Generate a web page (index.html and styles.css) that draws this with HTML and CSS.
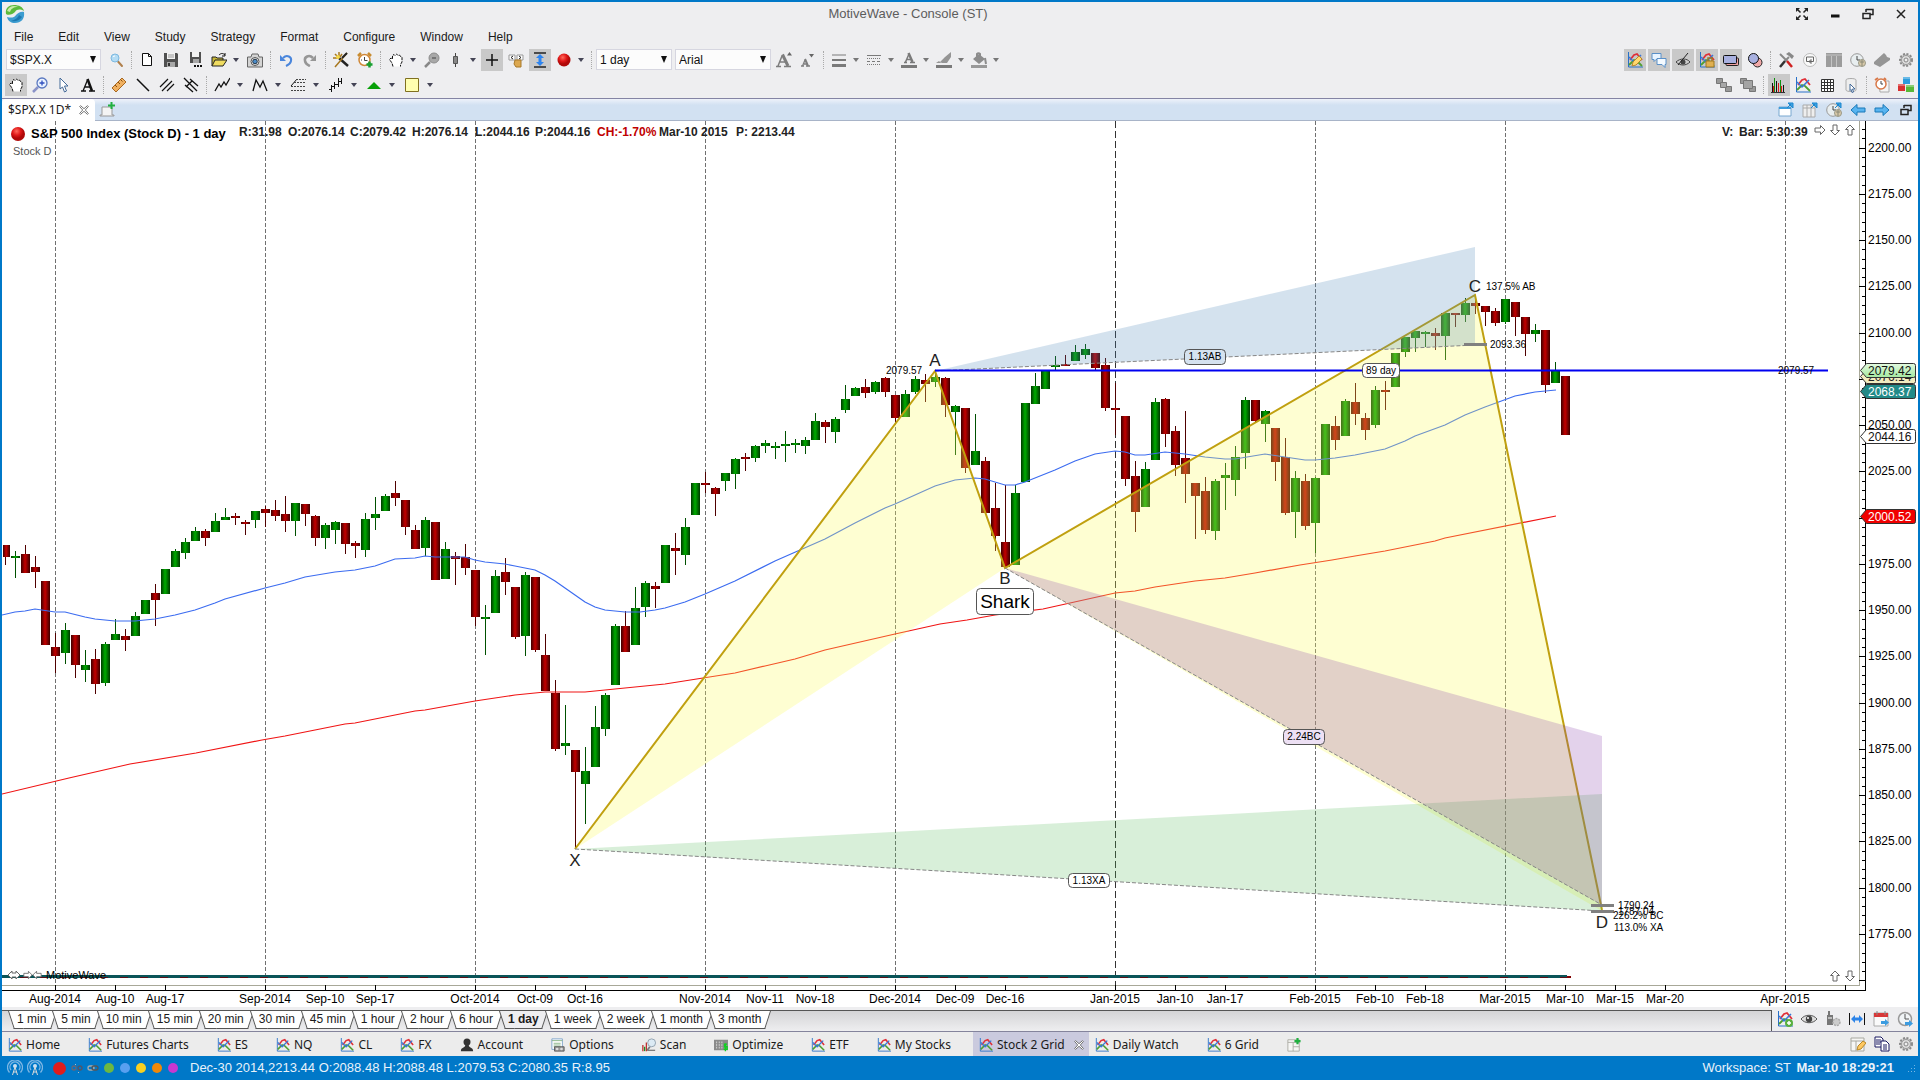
FILE: index.html
```html
<!DOCTYPE html>
<html lang="en">
<head>
<meta charset="utf-8">
<title>MotiveWave - Console (ST)</title>
<link rel="stylesheet" href="styles.css">
</head>
<body>
<svg class="defs" aria-hidden="true">
  <defs>
    <linearGradient id="gUp"><stop offset="0" stop-color="#003800"/><stop offset=".45" stop-color="#00ac00"/><stop offset="1" stop-color="#003800"/></linearGradient>
    <linearGradient id="gDown"><stop offset="0" stop-color="#3c0000"/><stop offset=".45" stop-color="#c40000"/><stop offset="1" stop-color="#3c0000"/></linearGradient>
    <linearGradient id="gFlag" x2="0" y2="1"><stop offset="0" stop-color="#e4fbe0"/><stop offset="1" stop-color="#a4e8a0"/></linearGradient>
    <radialGradient id="gRed" cx=".4" cy=".3"><stop offset="0" stop-color="#ff6a5c"/><stop offset=".6" stop-color="#e01818"/><stop offset="1" stop-color="#b00808"/></radialGradient>
  </defs>
  <symbol id="i-logo" viewBox="0 0 20 20"><path d="M1 10C0 4 4 1 9 1c5 0 9 2 10 6-4-2-7-2-9 1-2 2-6 4-9 2z" fill="#5cba3c"/><path d="M2 7c2-5 7-6 11-4-5 0-7 2-8 5z" fill="#c8eaa8"/><path d="M19 8c1 7-3 11-9 11-4 0-7-2-8-6 4 1 7 1 9-2 2-2 5-4 8-3z" fill="#3c9cd0"/><path d="M17 13c-3 4-7 5-11 4 4-1 7-3 8-6z" fill="#1c78b0"/></symbol>
  <symbol id="i-search" viewBox="0 0 16 16"><path d="M10 9.500l4 4.500" stroke="#b0804c" stroke-width="2" stroke-linecap="round"/><circle cx="7" cy="6" r="4" fill="#b4dcf4" stroke="#7cb8e0"/><path d="M5 5a2 2 0 0 1 2-1" stroke="#fff" fill="none"/></symbol>
  <symbol id="i-new" viewBox="0 0 16 16"><path d="M3.500 1.500h6l3 3v9h-9z" fill="#fff" stroke="#111"/><path d="M9.500 1.500v3h3" fill="none" stroke="#111"/></symbol>
  <symbol id="i-save" viewBox="0 0 16 16"><path d="M1 1h13l1 1v13H1z" fill="#505050"/><path d="M4 1h8v6H4z" fill="#f2f2f2"/><path d="M5 3h6M5 5h6" stroke="#999"/><path d="M4 10h8v5H4z" fill="#a8a8a8"/><path d="M5 11h2v3H5z" fill="#333"/></symbol>
  <symbol id="i-saveas" viewBox="0 0 16 16"><path d="M3 0h11v11H3z" fill="#505050"/><path d="M5 0h7v5H5z" fill="#f2f2f2"/><path d="M6 7h6v4H6z" fill="#a8a8a8"/><path d="M7 14h2M10 14h2M13 14h2" stroke="#111" stroke-width="2"/></symbol>
  <symbol id="i-open" viewBox="0 0 16 16"><path d="M1 14V5h4l1 1h6v3" fill="#c8b838" stroke="#222"/><path d="M1 14l3-6h12l-4 6z" fill="#f0dc60" stroke="#222"/><path d="M8 3c2-2 4-2 6 0M14 1v3h-3" fill="none" stroke="#111"/></symbol>
  <symbol id="i-camera" viewBox="0 0 16 16"><path d="M5 2h6l1 3h3.500v10H.5V5H4z" fill="#d4d4d4" stroke="#666"/><circle cx="8" cy="9.500" r="4" fill="#eee" stroke="#555"/><circle cx="8" cy="9.500" r="2.300" fill="#4c8cc8" stroke="#234"/></symbol>
  <symbol id="i-undo" viewBox="0 0 16 16"><path d="M2 3v6h6z" fill="#4a86dc"/><path d="M5 6c4-4 9-1 8 3-.5 3-3 4-5 5" fill="none" stroke="#4a86dc" stroke-width="2"/></symbol>
  <symbol id="i-redo" viewBox="0 0 16 16"><path d="M14 3v6H8z" fill="#969696"/><path d="M11 6C7 2 2 5 3 9c.5 3 3 4 5 5" fill="none" stroke="#969696" stroke-width="2.500"/></symbol>
  <symbol id="i-wand" viewBox="0 0 16 16"><path d="M6 6l9 8" stroke="#222" stroke-width="2.500"/><path d="M14 1L2 15M2 2l4 4M6 0v5M0 6h5M9 2L7 5" stroke="#a87820" stroke-width="1.500"/><path d="M14 1l-5 5" stroke="#222" stroke-width="2"/><circle cx="5" cy="5" r="2" fill="#f4d848"/></symbol>
  <symbol id="i-alarm" viewBox="0 0 16 16"><path d="M1 4l3-3M14 4l-3-3" stroke="#c88c30" stroke-width="2.500"/><circle cx="7.500" cy="8" r="5.500" fill="#fff" stroke="#d08838" stroke-width="1.500"/><path d="M7.500 5v3.500h3M4 8h1" fill="none" stroke="#444"/><path d="M12.500 9.500v6M9.500 12.500h6" stroke="#18a030" stroke-width="2.500"/></symbol>
  <symbol id="i-hand" viewBox="0 0 16 16"><path d="M5 14.500L4 11 1.500 7.500 3 6l1.500 1V3.500L6 2.500l1 1L8.500 2 10 3.500l1.500-.5 1 1.500 1.500.5v5l-1.500 2.500v2z" fill="#fff"/><path d="M5 14.500L4 11 1.500 7.500 3 6l1.500 1V3.500L6 2.500l1 1L8.500 2 10 3.500l1.500-.5 1 1.500 1.500.5v5l-1.500 2.500v2" fill="none" stroke="#111" stroke-dasharray="3 1"/></symbol>
  <symbol id="i-zoomout" viewBox="0 0 16 16"><path d="M6 10l-5 5" stroke="#888" stroke-width="2.500"/><circle cx="10" cy="6" r="5" fill="#a8a8a8" stroke="#8c8c8c"/><path d="M8 6h4" stroke="#444"/></symbol>
  <symbol id="i-zoomin" viewBox="0 0 16 16"><path d="M6 10l-5 5" stroke="#8a93c8" stroke-width="2.500"/><circle cx="10" cy="6" r="5" fill="#eaf2ff" stroke="#5a78c0" stroke-width="1.300"/><path d="M7.500 6h5M10 3.500v5" stroke="#3050c0" stroke-width="1.300"/></symbol>
  <symbol id="i-candle" viewBox="0 0 16 16"><path d="M7.500 1v14" stroke="#444"/><path d="M5.500 4.500h4v7h-4z" fill="#888" stroke="#555"/></symbol>
  <symbol id="i-plus" viewBox="0 0 16 16"><path d="M8 2v12M2 8h12" stroke="#111" stroke-width="1.500"/></symbol>
  <symbol id="i-keys" viewBox="0 0 16 16"><path d="M1 3h6v5H1zM9 3h6v5H9z" fill="#fff" stroke="#999"/><path d="M5 4L3 5.500 5 7M11 4l2 1.500L11 7" fill="none" stroke="#222"/><path d="M7 8h6v7H8l-2-3z" fill="#dca850" stroke="#a87828"/></symbol>
  <symbol id="i-vert" viewBox="0 0 16 16"><path d="M2 1h12M2 15h12" stroke="#222" stroke-width="1.500"/><path d="M8 2l4 4H9.500v4H12l-4 4-4-4h2.500V6H4z" fill="#2c84f0"/></symbol>
  <symbol id="i-ball" viewBox="0 0 16 16"><circle cx="8" cy="8" r="6.500" fill="url(#gRed)"/></symbol>
  <symbol id="i-fontup" viewBox="0 0 16 16"><path d="M0 14.500h5M8 14.500h7M6 4L2 14M4 10h6" stroke="#7e7e7e" stroke-width="1.500" fill="none"/><path d="M6.500 2.500L12 14" stroke="#7e7e7e" stroke-width="3"/><path d="M11 3.500L13.500 0 16 3.500z" fill="#666"/></symbol>
  <symbol id="i-fontdn" viewBox="0 0 16 16"><path d="M1 14h3M6 14h4M2.500 14L5 8M4 12h4" stroke="#7e7e7e" stroke-width="1.300" fill="none"/><path d="M5 7l3 7" stroke="#7e7e7e" stroke-width="2"/><path d="M9 2l2.500 3.500L14 2z" fill="#666"/></symbol>
  <symbol id="i-lines" viewBox="0 0 16 16"><path d="M1 3h14" stroke="#7a7a7a"/><path d="M1 8h14" stroke="#7a7a7a" stroke-width="2"/><path d="M1 13.500h14" stroke="#7a7a7a" stroke-width="3"/></symbol>
  <symbol id="i-dashes" viewBox="0 0 16 16"><path d="M1 3.500h14" stroke="#7a7a7a"/><path d="M1 6.500h14M1 12.500h14" stroke="#7a7a7a" stroke-dasharray="1 1"/><path d="M1 9.500h14" stroke="#7a7a7a" stroke-dasharray="3 2"/></symbol>
  <symbol id="i-fcolor" viewBox="0 0 16 16"><path d="M0 14.500h16" stroke="#7a7a7a" stroke-width="3"/><path d="M3 10.500h3M9 10.500h5M4.500 10L8 2M6 7.500h4" stroke="#7a7a7a" stroke-width="1.500" fill="none"/><path d="M7.500 1l4 9" stroke="#7a7a7a" stroke-width="2.500"/></symbol>
  <symbol id="i-pen" viewBox="0 0 16 16"><path d="M0 14.500h16" stroke="#7a7a7a" stroke-width="3"/><path d="M4 10l5-5 6-5v5l-4 6H6zM0 11l3-2 2 2z" fill="#959595"/></symbol>
  <symbol id="i-bucket" viewBox="0 0 16 16"><path d="M0 14.500h16" stroke="#999" stroke-width="3"/><path d="M2 7l6-5 6 5-6 5z" fill="#8c8c8c"/><path d="M6 5V2a2 2 0 0 1 3 0v3M14 6l1 6" stroke="#8c8c8c" stroke-width="2" fill="none"/></symbol>
  <symbol id="i-cursor" viewBox="0 0 16 16"><path d="M4 1l8 8H8.500l2 5-2 1-2-5L4 12z" fill="#fff" stroke="#456a98"/></symbol>
  <symbol id="i-text" viewBox="0 0 16 16"><path d="M1 14h5M9 14h6M3 14L7.500 3M5 10h6" stroke="#111" stroke-width="1.300" fill="none"/><path d="M7.500 2L12 14" stroke="#111" stroke-width="2.500"/></symbol>
  <symbol id="i-ruler" viewBox="0 0 16 16"><path d="M1 11L11 1l4 4L5 15z" fill="#f0b060" stroke="#a86820"/><path d="M4 8l2 2M7 5l2 2M9.500 2.500l2 2" stroke="#8a5010"/></symbol>
  <symbol id="i-line" viewBox="0 0 16 16"><path d="M2 2l12 12" stroke="#111" stroke-width="1.500"/></symbol>
  <symbol id="i-para" viewBox="0 0 16 16"><path d="M1 10L9 2M3 14L13 4M8 14l7-7" stroke="#111" stroke-width="1.200"/></symbol>
  <symbol id="i-fork" viewBox="0 0 16 16"><path d="M1 1l13 13M7 2l8 7M2 8l8 7M3 10l6-6" stroke="#111" stroke-width="1.300"/></symbol>
  <symbol id="i-zig" viewBox="0 0 16 16"><path d="M1 14l4-7 2 3 3-5 2 3 4-7" stroke="#111" fill="none" stroke-width="1.300"/></symbol>
  <symbol id="i-em" viewBox="0 0 16 16"><path d="M1 14L4 3l4 7 3-6 4 10" stroke="#111" fill="none" stroke-width="1.300"/></symbol>
  <symbol id="i-fib" viewBox="0 0 16 16"><path d="M1 9l6-7" stroke="#111"/><path d="M6 2.500h10M4 5.500h12M1 9.500h15M1 13.500h15" stroke="#444" stroke-dasharray="2 1"/></symbol>
  <symbol id="i-bars" viewBox="0 0 16 16"><path d="M3.500 8v7M1 12.500h2M3.500 9.500h3M6.500 5v7M7 7.500h4M10.500 1v9M11 4.500h2M13.500 1v6" stroke="#111" fill="none"/></symbol>
  <symbol id="i-tri" viewBox="0 0 16 16"><path d="M1 12l7-7 7 7z" fill="#08a008"/></symbol>
  <symbol id="i-box" viewBox="0 0 16 16"><path d="M1.500 1.500h13v13h-13z" fill="#ffffb0" stroke="#807020"/></symbol>
  <symbol id="i-chart" viewBox="0 0 16 16"><path d="M1.500 0v15H16" stroke="#2870c8" fill="none"/><path d="M2 13l5-5 3 1 5 5" stroke="#50a030" stroke-width="1.800" fill="none"/><path d="M3 8l4-5 3-1 5 6" stroke="#e03038" stroke-width="1.800" fill="none"/><path d="M2 5l5 5 7-7" stroke="#3878d8" stroke-width="1.500" fill="none"/></symbol>
  <symbol id="i-chartpen" viewBox="0 0 16 16"><use href="#i-chart"/><path d="M5 14l1-4 6-6 3 3-6 6z" fill="#ffd870" stroke="#b88828"/></symbol>
  <symbol id="i-chartlock" viewBox="0 0 16 16"><use href="#i-chart"/><path d="M7 9h8v6H7z" fill="#e0b050" stroke="#a07820"/><path d="M9 9V6h4v3" stroke="#a07820" stroke-width="1.500" fill="none"/></symbol>
  <symbol id="i-chartadd" viewBox="0 0 16 16"><use href="#i-chart"/><circle cx="12" cy="12" r="4" fill="#58b040"/><path d="M12 10v4M10 12h4" stroke="#fff" stroke-width="1.500"/></symbol>
  <symbol id="i-chat" viewBox="0 0 16 16"><path d="M1 1.500h9v6H5l-2 2v-2H1z" fill="#e8f4ff" stroke="#5a90c8"/><path d="M6 6.500h9v6h-1v3l-3-3H6z" fill="#f4faff" stroke="#5a90c8"/></symbol>
  <symbol id="i-eye" viewBox="0 0 16 16"><path d="M0 8c4-5 12-5 16 0-4 5-12 5-16 0z" fill="#ddd" stroke="#555"/><circle cx="8" cy="8" r="3.200" fill="#444"/><circle cx="7" cy="7" r="1" fill="#fff"/></symbol>
  <symbol id="i-noeye" viewBox="0 0 16 16"><path d="M1 10c4-4 11-4 14 0-4 4-10 4-14 0z" fill="#ccc" stroke="#444"/><circle cx="8" cy="10" r="2.500" fill="#444"/><path d="M3 13L13 1" stroke="#222"/></symbol>
  <symbol id="i-rects" viewBox="0 0 16 16"><rect x="3" y="6" width="12.500" height="7.500" rx="1" fill="#f0a0a0" stroke="#222"/><rect x=".5" y="3.500" width="13" height="8" rx="1" fill="#a8b0e0" stroke="#111"/></symbol>
  <symbol id="i-circs" viewBox="0 0 16 16"><circle cx="10.500" cy="10.500" r="4.500" fill="#f0a8a8" stroke="#222"/><circle cx="6.500" cy="6.500" r="5" fill="#a8b0e0" stroke="#111"/></symbol>
  <symbol id="i-tools" viewBox="0 0 16 16"><path d="M2 2l7 7" stroke="#888" stroke-width="2"/><path d="M9 9l5 6" stroke="#d02020" stroke-width="2.500"/><path d="M11 5l-4 4" stroke="#888" stroke-width="2"/><path d="M7 9l-5 6" stroke="#333" stroke-width="2.500"/><path d="M8 2l3-2 5 4-2 3-3-3z" fill="#888"/></symbol>
  <symbol id="i-replay" viewBox="0 0 16 16"><circle cx="8" cy="8" r="6.500" fill="#fafafa" stroke="#bbb"/><path d="M9 9.500H4.500V5h7v4.500H9M9 7.500v4l-2-2z" stroke="#666" fill="none"/></symbol>
  <symbol id="i-cols" viewBox="0 0 16 16"><path d="M0 1h16v14H0z" fill="#9c9c9c"/><path d="M0 3h16M5.500 4v11M10.500 4v11" stroke="#c4c4c4"/></symbol>
  <symbol id="i-clock" viewBox="0 0 16 16"><circle cx="7" cy="8" r="6.300" fill="#e8eef0" stroke="#999"/><path d="M7 4v4h3" stroke="#444" fill="none"/><circle cx="12" cy="11" r="3.500" fill="#d8c8a8" stroke="#998"/><path d="M12 8v6M10 10h4" stroke="#887"/></symbol>
  <symbol id="i-clockgo" viewBox="0 0 16 16"><use href="#i-clock"/><path d="M9 6l4-4M10 1h5v5z" stroke="#1c88d0" fill="#3ca0e0"/></symbol>
  <symbol id="i-ticket" viewBox="0 0 16 16"><path d="M0 10L10 1l2 2 1 2 3 1v2L6 15l-6-3z" fill="#959595"/></symbol>
  <symbol id="i-gear" viewBox="0 0 16 16"><circle cx="8" cy="8" r="6" fill="#ccc" stroke="#8a8a8a" stroke-width="2" stroke-dasharray="2 1.500"/><circle cx="8" cy="8" r="4.500" fill="#ddd" stroke="#999"/><circle cx="8" cy="8" r="2" fill="#eee" stroke="#888"/></symbol>
  <symbol id="i-stackb" viewBox="0 0 16 16"><path d="M.5 1.500h6v5h-6zM9.500 9.500h6v5h-6z" fill="#999" stroke="#777"/><path d="M4.500 5.500h6v5h-6z" fill="#a8a8a8" stroke="#777"/></symbol>
  <symbol id="i-stackf" viewBox="0 0 16 16"><path d="M.5 1.500h6v5h-6zM9.500 9.500h6v5h-6z" fill="#999" stroke="#777"/><path d="M3.500 3.500h9v8h-9z" fill="#a4a4a4" stroke="#777"/></symbol>
  <symbol id="i-vol" viewBox="0 0 16 16"><path d="M1.500 6v9M5.500 4v11M12.500 8v7" stroke="#111"/><path d="M3.500 1v14M9.500 3v12" stroke="#109010"/><path d="M2.500 9v6M7.500 6v9M10.500 9v6" stroke="#e01818"/><path d="M0 15.500h14" stroke="#333"/></symbol>
  <symbol id="i-grid" viewBox="0 0 16 16"><path d="M2.500 2.500h12v12h-12zM5.500 2v12M8.500 2v12M11.500 2v12M2 5.500h12M2 8.500h12M2 11.500h12" stroke="#333" fill="#fff"/></symbol>
  <symbol id="i-db" viewBox="0 0 16 16"><path d="M3 3c0-2 10-2 10 0v10c0 2-10 2-10 0z" fill="#eee" stroke="#aaa"/><path d="M7 7l5 5H9.500l1 3-1.500.5-1-3-1 1z" fill="#fff" stroke="#456a98"/></symbol>
  <symbol id="i-alarms" viewBox="0 0 16 16"><path d="M5 4h10v11H6z" fill="#f4f4f4" stroke="#aaa"/><circle cx="7" cy="7" r="5" fill="#fff" stroke="#d87848" stroke-width="1.500"/><path d="M1 3l3-2M12 3l-2-2" stroke="#d87848" stroke-width="2"/><path d="M7 4v3h2" stroke="#444" fill="none"/></symbol>
  <symbol id="i-cubes" viewBox="0 0 16 16"><path d="M5 0h7v7H5z" fill="#2c9cdc"/><path d="M0 7h7v7H0z" fill="#d83030"/><path d="M8 8h8v7H8z" fill="#58b838"/><path d="M5 0h7v2H5zM0 7h7v2H0zM8 8h8v2H8z" fill="#fff" opacity=".3"/></symbol>
  <symbol id="i-wingo" viewBox="0 0 16 16"><path d="M1 5h12v9H1z" fill="#fff" stroke="#78a8d0"/><path d="M1 5h12v2H1z" fill="#3c9cdc"/><path d="M9 6l4-4M10 1h5v5z" stroke="#1c88d0" fill="#3ca0e0"/></symbol>
  <symbol id="i-colgo" viewBox="0 0 16 16"><path d="M1 3h12v12H1z" fill="#eee" stroke="#aaa"/><path d="M5 3v12M9 3v12M1 6h12" stroke="#aaa"/><path d="M9 6l4-4M10 1h5v5z" stroke="#1c88d0" fill="#3ca0e0"/></symbol>
  <symbol id="i-left" viewBox="0 0 16 16"><path d="M1 8l6-5.500V6h8v4H7v3.500z" fill="#58b4f0" stroke="#1878b8"/></symbol>
  <symbol id="i-right" viewBox="0 0 16 16"><path d="M15 8L9 2.500V6H1v4h8v3.500z" fill="#58b4f0" stroke="#1878b8"/></symbol>
  <symbol id="i-restore" viewBox="0 0 16 16"><path d="M6 3.500h7v5h-3M6 3v3M3 7.500h7v5H3z" fill="none" stroke="#222" stroke-width="1.500"/></symbol>
  <symbol id="i-full" viewBox="0 0 16 16"><path d="M3 3l3.500 3.500M13 3L9.500 6.500M3 13l3.500-3.500M13 13L9.500 9.500" stroke="#222" stroke-width="1.500"/><path d="M2 2h4L2 6zM14 2h-4l4 4zM2 14h4l-4-4zM14 14h-4l4-4z" fill="#222"/></symbol>
  <symbol id="i-min" viewBox="0 0 16 16"><path d="M4 10h8.500" stroke="#111" stroke-width="3"/></symbol>
  <symbol id="i-close" viewBox="0 0 16 16"><path d="M4 4l8 8M12 4l-8 8" stroke="#222" stroke-width="1.500"/></symbol>
  <symbol id="i-tabx" viewBox="0 0 16 16"><path d="M4 3l4 3.500L12 3l1 1-3.500 4L13 12l-1 1-4-3.500L4 13l-1-1 3.500-4L3 4z" fill="#fff" stroke="#666"/></symbol>
  <symbol id="i-addtab" viewBox="0 0 16 16"><path d="M1 14h14v-1h-2V5H3v8H1z" fill="#f4f4f4" stroke="#999"/><path d="M12.500 0v7M9 3.500h7" stroke="#20b040" stroke-width="2"/></symbol>
  <symbol id="i-person" viewBox="0 0 16 16"><circle cx="8" cy="4.500" r="4" fill="#333"/><path d="M1 15c0-5 5-3 5-7h4c0 4 5 2 5 7z" fill="#333"/></symbol>
  <symbol id="i-options" viewBox="0 0 16 16"><path d="M1 1h12v12H1z" fill="#fff" stroke="#78a0c8"/><path d="M1 3h12M3 6h8M3 8h8M3 10h8" stroke="#80b080"/><path d="M4 10h11v5H4z" fill="#999" stroke="#555"/><circle cx="7" cy="12.500" r="1.500" fill="#ddd"/><circle cx="12" cy="12.500" r="1.500" fill="#ddd"/></symbol>
  <symbol id="i-scan" viewBox="0 0 16 16"><path d="M1 8v7M5 5v10" stroke="#c03030" stroke-width="1.500"/><path d="M3 10v5" stroke="#209020" stroke-width="1.500"/><path d="M6 14h9" stroke="#444"/><path d="M9 10l-3 4" stroke="#777" stroke-width="2"/><circle cx="11" cy="5.500" r="4.500" fill="#dceaf4" stroke="#8a9caa"/></symbol>
  <symbol id="i-optimize" viewBox="0 0 16 16"><path d="M0 2h16v12H0z" fill="#8a8a8a"/><path d="M3 4v8M6 4v8M9 4v8" stroke="#ddd" stroke-dasharray="2 1"/><path d="M15 7h-3v3h3v3h-4M13 6v9" stroke="#10d020" stroke-width="1.500" fill="none"/></symbol>
  <symbol id="i-phone" viewBox="0 0 16 16"><path d="M3 0h2v4h3v10H2V4h1z" fill="#777"/><path d="M3 6h4v2H3z" fill="#bbb"/><circle cx="11.500" cy="11" r="3.500" fill="#ccc" stroke="#aaa" stroke-width="1.500" stroke-dasharray="2 1"/></symbol>
  <symbol id="i-fit" viewBox="0 0 16 16"><path d="M.5 2v12M15.500 2v12" stroke="#111"/><path d="M2 8l4-4v2.500h4V4l4 4-4 4V9.500H6V12z" fill="#2c84e8"/></symbol>
  <symbol id="i-cal" viewBox="0 0 16 16"><path d="M1 2h14v13H1z" fill="#fafafa" stroke="#aaa"/><path d="M1 2h14v4H1z" fill="#d83838"/><path d="M4 0v4M12 0v4" stroke="#888"/><path d="M8 10h4V8l4 3.500-4 3.500v-2H8z" fill="#3c9ce0"/></symbol>
  <symbol id="i-clockr" viewBox="0 0 16 16"><circle cx="8" cy="8" r="6.500" fill="#f0f4f6" stroke="#999" stroke-width="1.500"/><path d="M8 3v5h4" stroke="#555" fill="none"/><path d="M8 11h4V9l4 3.500-4 3.500v-2H8z" fill="#3c9ce0"/></symbol>
  <symbol id="i-layadd" viewBox="0 0 16 16"><path d="M1 2h13v13H1zM1 5h13M7 5v10M7 10h7" fill="#f6f6f4" stroke="#a8a8a0"/><path d="M12 0v7M8.500 3.500h7" stroke="#20b040" stroke-width="2.500"/></symbol>
  <symbol id="i-layedit" viewBox="0 0 16 16"><path d="M1 2h13v13H1zM1 5h13M6 5v10" fill="#f6f6f4" stroke="#a8a8a0"/><path d="M7 14l1-4 5-5 3 2-5 6z" fill="#ffc860" stroke="#b88828"/></symbol>
  <symbol id="i-copy" viewBox="0 0 16 16"><path d="M1 1h6l2 2v8H1zM2 4h5M2 6h5M2 8h4" fill="#fff" stroke="#181860"/><path d="M7 5h5l3 3v7H7zM9 9h4M9 11h4M9 13h4" fill="#fff" stroke="#181860"/></symbol>
  <symbol id="i-antenna" viewBox="0 0 16 16"><circle cx="8" cy="6" r="2" fill="#c8e0f4"/><path d="M4 10a5 5 0 1 1 8 0M2.500 12.500a7.500 7.500 0 1 1 11 0" stroke="#80b8e4" stroke-width="1.300" fill="none"/><path d="M8 7L5.500 15M8 7l2.500 8M6 12h4" stroke="#d8d8d8" fill="none"/></symbol>
  <symbol id="i-link" viewBox="0 0 16 16"><rect x="3" y="6" width="6" height="4" rx="2" fill="none" stroke="#aaa" stroke-width="1.300"/><rect x="7" y="6" width="6" height="4" rx="2" fill="none" stroke="#555" stroke-width="1.300"/></symbol>
  <symbol id="i-unlink" viewBox="0 0 16 16"><rect x="3" y="6" width="4" height="4" rx="2" fill="none" stroke="#667" stroke-width="1.300"/><rect x="9" y="6" width="4" height="4" rx="2" fill="none" stroke="#556" stroke-width="1.300"/><path d="M6 4l1 1M9 12l1 1" stroke="#abc"/></symbol>
  <symbol id="i-arrow" viewBox="0 0 12 12"><path d="M11 6L6.500 1.500V4H1v4h5.500v2.500z" fill="#fff" stroke="#666"/></symbol>
  <symbol id="i-both" viewBox="0 0 12 12"><path d="M0 6l4-4v2h4V2l4 4-4 4V8H4v2z" fill="#fff" stroke="#666"/></symbol>
</svg>

<header class="titlebar">
  <svg class="logo"><use href="#i-logo"/></svg>
  <h1>MotiveWave - Console (ST)</h1>
  <div class="winctl" data-icons="full min restore close"></div>
</header>
<nav class="menu">
  <button>File</button><button>Edit</button><button>View</button><button>Study</button><button>Strategy</button><button>Format</button><button>Configure</button><button>Window</button><button>Help</button>
</nav>

<div class="toolbar">
  <span class="combo symbol"><select aria-label="Symbol"><option>$SPX.X</option></select></span>
  <div class="group" data-icons="search | new save saveas open+ camera | undo redo | wand alarm | hand+ zoomout candle+ plus* keys vert* ball+ |"></div>
  <span class="combo period"><select aria-label="Period"><option>1 day</option></select></span>
  <span class="combo font"><select aria-label="Font"><option>Arial</option></select></span>
  <div class="group dim" data-icons="fontup fontdn | lines+ dashes+ fcolor+ pen+ bucket+"></div>
  <div class="group end" data-icons="chartpen* chat* noeye* chartlock* rects* circs | tools replay cols clock ticket gear"></div>
</div>
<div class="toolbar drawing">
  <div class="group" data-icons="hand* zoomin cursor text | ruler line para fork | zig+ em+ fib+ bars+ tri+ box+"></div>
  <div class="group end" data-icons="stackb stackf | vol* chart grid db | alarms cubes"></div>
</div>

<div class="tabstrip">
  <button class="doctab">$SPX.X 1D*<svg><use href="#i-tabx"/></svg></button>
  <div class="group" data-icons="addtab"></div>
  <div class="group end" data-icons="wingo colgo clockgo left right restore"></div>
</div>

<main class="chart">
  <svg id="plot" viewBox="2 121 1916 886" role="img" aria-label="S&amp;P 500 Index daily chart">
    <g id="grid"></g>
    <g id="candles"></g>
    <polyline class="ma slow" points="2,794 69,778 130,764 196,753 262,740 285,736 315,730 345,724 355,723 415,711 425,710 475,701 515,695 545,692 585,692 665,684 703,678 735,673 765,666 795,659 825,650 895,634 940,624 967,620 995,615 1043,609 1115,593 1135,591 1155,587 1195,581 1225,578 1255,573 1300,565 1332,560 1355,556 1385,551 1435,541 1445,538 1556,516"/>
    <polyline class="ma fast" points="2,615 15,612 25,611 35,609 55,612 65,612 85,617 95,619 115,621 135,621 155,619 175,615 195,610 215,603 225,599 265,588 285,583 305,577 335,572 355,570 375,566 395,559 415,558 425,556 435,557 465,557 475,560 485,562 505,564 515,566 525,568 535,570 545,575 555,581 565,588 585,602 595,607 605,610 625,612 640,612 655,610 665,608 685,602 695,598 705,594 735,581 775,561 825,539 855,523 885,508 895,504 935,486 955,480 975,478 985,479 1005,485 1015,485 1025,482 1055,470 1075,461 1095,454 1115,451 1125,452 1135,455 1145,455 1165,452 1185,454 1205,457 1225,459 1235,459 1265,454 1285,457 1305,460 1315,460 1335,458 1355,455 1385,449 1405,441 1415,436 1445,425 1465,415 1485,407 1515,396 1535,392 1556,390"/>
    <path class="f-yellow" d="M575 849L935 371L1005 568ZM1005 568L1475 295L1602 911Z"/>
    <path class="legs" d="M575 849L935 371L1005 568L1475 295L1602 910"/>
    <path class="f-blue" d="M935 371L1475 247V345Z"/>
    <path class="f-green" d="M575 849L1602 794V911Z"/>
    <path class="f-purple" d="M1005 568L1602 736V905Z"/>
    <path class="proj" d="M935 371L1475 345M575 849L1602 911M1005 568L1602 905"/>
    <path class="level" d="M1464 344.500h23M1591 905.500h23M1591 911.500h23"/>
    <path class="hline" d="M935 370.500H1828"/>
    <g class="tag"><rect x="1184.500" y="349.500" width="41" height="15" rx="4" fill="#d5e2ef"/><text x="1205" y="360">1.13AB</text>
      <rect x="1362.500" y="363.500" width="37" height="14" rx="4"/><text x="1381" y="374">89 day</text>
      <rect x="1283.500" y="729.500" width="41" height="15" rx="4" fill="#ede0f4"/><text x="1304" y="740">2.24BC</text>
      <rect x="1068.500" y="873.500" width="41" height="14" rx="4"/><text x="1089" y="884">1.13XA</text></g>
    <g class="name"><rect x="976.500" y="588.500" width="57" height="26" rx="4"/><text x="1005" y="608">Shark</text></g>
    <g class="pt"><text x="935" y="366">A</text><text x="1005" y="584">B</text><text x="1475" y="292">C</text><text x="1602" y="928">D</text><text x="575" y="866">X</text></g>
    <g class="small"><text x="886" y="374">2079.57</text><text x="1778" y="374">2079.57</text><text x="1486" y="290">137.5% AB</text><text x="1490" y="348">2093.36</text><text x="1618" y="909">1790.24</text><text x="1618" y="915">1787.04</text><text x="1613" y="919">226.2% BC</text><text x="1614" y="931">113.0% XA</text></g>
    <path d="M2 976.500H1567" stroke="#0a5458" stroke-width="3"/><path d="M20 977.500H1567" stroke="#5a1018" stroke-dasharray="8 12"/><path d="M1567 977h4" stroke="#800000" stroke-width="2"/>
    <g class="frame"><path d="M2 985.500H1859.500V121" class="inner"/><path d="M2 990.500H1865.500V121"/></g>
    <g id="axis"></g>
    <g id="flags"></g>
    <circle cx="18" cy="134" r="7" fill="url(#gRed)"/>
    <text class="head" x="31" y="138">S&amp;P 500 Index (Stock D) - 1 day</text>
    <text class="ohlc"><tspan x="239" y="136">R:31.98</tspan><tspan x="288">O:2076.14</tspan><tspan x="350">C:2079.42</tspan><tspan x="412">H:2076.14</tspan><tspan x="475">L:2044.16</tspan><tspan x="535">P:2044.16</tspan><tspan x="597" class="neg">CH:-1.70%</tspan><tspan x="659">Mar-10 2015</tspan><tspan x="736">P: 2213.44</tspan><tspan x="1722">V:</tspan><tspan x="1739">Bar: 5:30:39</tspan></text>
    <text class="sub" x="13" y="155">Stock D</text>
    <text class="brand" x="46" y="979">MotiveWave</text>
    <use href="#i-arrow" x="1814" y="124" width="12" height="12"/>
    <use href="#i-arrow" width="12" height="12" transform="translate(1841 124) rotate(90)"/>
    <use href="#i-arrow" width="12" height="12" transform="translate(1844 136) rotate(-90)"/>
    <use href="#i-arrow" width="12" height="12" transform="translate(1829 982) rotate(-90)"/>
    <use href="#i-arrow" width="12" height="12" transform="translate(1856 970) rotate(90)"/>
    <use href="#i-both" x="8" y="969" width="12" height="12"/>
    <use href="#i-arrow" x="23" y="970" width="10" height="10"/>
    <use href="#i-arrow" width="10" height="10" transform="translate(42 980) rotate(180)"/>
  </svg>
</main>

<div class="periods">
  <div class="ptabs"><button>1 min</button><button>5 min</button><button>10 min</button><button>15 min</button><button>20 min</button><button>30 min</button><button>45 min</button><button>1 hour</button><button>2 hour</button><button>6 hour</button><button class="on">1 day</button><button>1 week</button><button>2 week</button><button>1 month</button><button>3 month</button></div>
  <div class="group end" data-icons="chartadd eye phone fit cal clockr"></div>
</div>

<nav class="pages">
  <button><svg><use href="#i-chart"/></svg>Home</button>
  <button><svg><use href="#i-chart"/></svg>Futures Charts</button>
  <button><svg><use href="#i-chart"/></svg>ES</button>
  <button><svg><use href="#i-chart"/></svg>NQ</button>
  <button><svg><use href="#i-chart"/></svg>CL</button>
  <button><svg><use href="#i-chart"/></svg>FX</button>
  <button><svg><use href="#i-person"/></svg>Account</button>
  <button><svg><use href="#i-options"/></svg>Options</button>
  <button><svg><use href="#i-scan"/></svg>Scan</button>
  <button><svg><use href="#i-optimize"/></svg>Optimize</button>
  <button><svg><use href="#i-chart"/></svg>ETF</button>
  <button><svg><use href="#i-chart"/></svg>My Stocks</button>
  <button class="on"><svg><use href="#i-chart"/></svg>Stock 2 Grid<svg class="x"><use href="#i-tabx"/></svg></button>
  <button><svg><use href="#i-chart"/></svg>Daily Watch</button>
  <button><svg><use href="#i-chart"/></svg>6 Grid</button>
  <button aria-label="Add page"><svg><use href="#i-layadd"/></svg></button>
  <div class="group end" data-icons="layedit copy gear"></div>
</nav>

<footer class="status">
  <svg class="ant"><use href="#i-antenna"/></svg><svg class="ant"><use href="#i-antenna"/></svg>
  <i class="dot big"></i><svg><use href="#i-unlink"/></svg><svg><use href="#i-link"/></svg>
  <i class="dot green"></i><i class="dot blue"></i><i class="dot yellow"></i><i class="dot orange"></i><i class="dot purple"></i>
  <span class="quote">Dec-30 2014,2213.44 O:2088.48 H:2088.48 L:2079.53 C:2080.35 R:8.95</span>
  <span class="ws">Workspace: ST <b>Mar-10 18:29:21</b></span>
  <i class="grip"></i>
</footer>
<script src="script.js"></script>
</body>
</html>
```
FILE: styles.css
```css
* { box-sizing: border-box; }
body {
  margin: 0;
  min-height: 100vh;
  display: flex;
  flex-direction: column;
  background: #eeeef0;
  border: 2px solid #0078c8;
  border-bottom: 0;
  font: 12px/16px "Liberation Sans", Arial, sans-serif;
  color: #1a1a1a;
}
.defs { position: absolute; width: 0; height: 0; }
button { border: 0; background: none; padding: 0; font: inherit; color: inherit; white-space: nowrap; }
svg { flex: none; }

.titlebar { display: grid; grid-template-columns: 1fr auto 1fr; align-items: center; height: 24px; padding: 0 8px 0 3px; }
.titlebar h1 { margin: 0 0 0 -99px; font-size: 13px; font-weight: 400; color: #5c5c5c; }
.logo { width: 20px; height: 20px; }
.winctl { display: flex; justify-content: flex-end; gap: 15px; }
.winctl .tool { width: 18px; height: 18px; }

.menu { display: flex; gap: 25px; height: 22px; align-items: center; padding-left: 12px; }

.toolbar { display: flex; align-items: center; gap: 2px; height: 24px; padding: 0 1px 1px 4px; }
.drawing { height: 26px; padding-left: 3px; padding-bottom: 1px; }
.group { display: flex; align-items: center; gap: 2px; }
.end { margin-left: auto; }
.tool { width: 22px; height: 22px; display: flex; align-items: center; justify-content: center; }
.tool svg { width: 16px; height: 16px; }
.tool.on { background: #c9c9c9; }
.drop { display: flex; align-items: center; }
.more { width: 12px; height: 22px; display: flex; align-items: center; justify-content: center; }
.more::before { content: ""; border: 3px solid transparent; border-top: 4px solid #445; border-bottom: 0; }
.dim .more::before { border-top-color: #777; }
.dim .drop + .drop { margin-left: -1px; }
.drawing .more { width: 14px; }
.sep { width: 5px; height: 18px; border-left: 1px dotted #aaa; margin-right: -2px; margin-left: 2px; }
.combo { position: relative; height: 21px; background: #fcfcfc; border: 1px solid #d6d6e0; }
.combo select { appearance: none; border: 0; background: none; width: 100%; height: 100%; padding: 0 3px; font: inherit; color: #111; }
.combo::after { content: ""; position: absolute; right: 4px; top: 6px; border: 3px solid transparent; border-top: 7px solid #111; border-bottom: 0; pointer-events: none; }
.symbol { width: 95px; margin-right: 2px; }
.period { width: 76px; margin-right: 1px; }
.font { width: 96px; }

.tabstrip { display: flex; height: 23px; align-items: center; border-top: 1px solid #8484a4; border-bottom: 1px solid #a8b4c8; background: linear-gradient(#eef2fa, #d2e1f2 6px); padding-right: 1px; }
.doctab { align-self: stretch; display: flex; align-items: center; gap: 6px; padding: 0 4px 0 6px; margin-right: 1px; background: #fff; border-radius: 4px 4px 0 0; font-family: "Noto Sans", sans-serif; margin-bottom: -1px; }
.doctab svg { width: 14px; height: 14px; }

.chart { background: #fff; }
.chart svg { display: block; width: 100%; height: auto; }
#grid path, #axis path, .wick, .frame path { shape-rendering: crispEdges; }
#grid path { stroke: #707070; stroke-dasharray: 4 2; }
#grid .year { stroke: #333; stroke-dasharray: 7 3; }
.ma { fill: none; stroke-width: 1.200; }
.slow { stroke: #f01414; }
.fast { stroke: #3c6cf0; }
.f-yellow { fill: rgba(250, 250, 94, .28); }
.f-blue { fill: rgba(70, 130, 180, .23); }
.f-green { fill: rgba(85, 187, 90, .23); }
.f-purple { fill: rgba(133, 60, 170, .23); }
.legs { fill: none; stroke: #c0a010; stroke-width: 2; }
.proj { fill: none; stroke: #868686; stroke-dasharray: 4 2; }
.level { stroke: #808080; stroke-width: 3; }
.hline { stroke: #0000f0; stroke-width: 2; }
.tag { font-size: 10px; text-anchor: middle; }
.tag rect, .name rect { stroke: #555; }
.tag rect:not([fill]), .name rect { fill: #fff; }
.name { font-size: 19px; text-anchor: middle; }
.pt { font-size: 17px; text-anchor: middle; fill: #222; }
.small { font-size: 10px; }
.frame path { fill: none; stroke: #000; }
.frame .inner { stroke: #a8a898; }
.head { font-size: 13px; font-weight: 700; }
.ohlc { font-weight: 700; fill: #222; }
.ohlc .neg { fill: #c00000; }
.sub { font-size: 11px; fill: #555; }
.brand { font-size: 11px; }
#axis path { stroke: #000; }
#axis .date { text-anchor: middle; }

.periods { flex: none; display: flex; height: 25px; padding-top: 3px; background: #eeeef0; border-bottom: 1px solid #84849c; }
.ptabs { flex: 1; display: flex; padding-left: 8px; border-top: 1px solid #555; border-right: 1px solid #555; background: linear-gradient(#d4d4d6, #eeeef0); margin-right: 2px; }
.ptabs button { position: relative; isolation: isolate; height: 17px; padding: 0 8px 1px 7px; line-height: 16px; }
.ptabs button::before, .ptabs button::after { content: ""; position: absolute; z-index: -1; top: 0; width: 60%; height: 17px; background: #fff; border-bottom: 1px solid #555; }
.ptabs button::before { left: -2px; border-left: 1px solid #555; transform: skewX(18deg); transform-origin: 0 0; }
.ptabs button::after { right: -2px; border-right: 1px solid #555; transform: skewX(-18deg); transform-origin: 100% 0; }
.ptabs .on { font-weight: 700; }
.ptabs .on::before, .ptabs .on::after { background: #eeeef0; }
.periods .end { padding-right: 2px; margin-left: 0; height: 18px; }

.pages { flex: none; display: flex; height: 24px; padding-right: 1px; background: #ececec; font-family: "Noto Sans", sans-serif; }
.pages > button { display: flex; align-items: center; gap: 4px; padding: 1px 22px 0 6px; }
.pages > button svg { width: 14px; height: 14px; }
.pages > .on { background: #cacade; padding-right: 0; }
.pages > .on .x { margin: 0 3px; }

.status { flex: 1 0 24px; display: flex; align-items: center; background: #0078c8; color: #e8f2fa; font-size: 13px; padding: 0 2px 0 5px; }
.status svg { width: 16px; height: 16px; }
.status .ant { margin-right: 4px; }
.dot { width: 10px; height: 10px; border-radius: 50%; margin: 0 3px; background: #6cb840; }
.status .big { width: 13px; height: 13px; margin: 0 3px 0 6px; background: #e01c1c; }
.dot.blue { background: #58a0f0; }
.dot.yellow { background: #f8d020; }
.dot.orange { background: #f08808; }
.dot.purple { background: #c838d0; }
.quote { margin-left: 9px; }
.ws { margin-left: auto; }
.ws b { margin-left: 2px; }
.grip { width: 9px; height: 9px; margin-left: 13px; background: radial-gradient(circle, #7cb8e4 1px, transparent 1px) 0 0 / 3px 3px; clip-path: polygon(100% 0, 100% 100%, 0 100%); }
```
FILE: script.js
```js
// Toolbar groups: "+" adds a drop arrow, "*" marks a pressed button, "|" is a separator.
document.querySelectorAll('[data-icons]').forEach(group => {
  group.innerHTML = group.dataset.icons.split(' ').map(token => {
    if (token === '|') return '<span class="sep"></span>';
    const name = token.replace(/[+*]/g, '');
    const button = `<button class="tool${token.includes('*') ? ' on' : ''}" aria-label="${name}"><svg><use href="#i-${name}"/></svg></button>`;
    return token.includes('+') ? `<span class="drop">${button}<button class="more" aria-label="${name} options"></button></span>` : button;
  }).join('');
});

// Daily candles: direction, body top, body bottom, high, low (chart units), one every 10 units.
const candles = `r545,557,545,565 g556,558,551,578 r554,573,545,573 r567,572,556,588 r581,645,581,645 r647,656,633,673 g630,653,623,664 r635,665,635,678 g665,670,650,682 r659,684,649,694
g644,683,642,686 g634,640,619,640 r636,640,629,651 g616,636,612,636 g600,614,600,614 r593,600,584,626 g569,594,569,594 g551,567,549,567 g542,553,538,559 g531,541,527,541
r531,538,529,546 g521,532,513,532 g517,520,508,520 r516,518,513,525 r522,524,520,535 g511,520,511,528 r509,513,506,527 r510,516,500,521 r514,521,496,532 g503,521,503,536
r504,514,504,526 r516,538,515,546 g525,538,523,549 g522,530,521,544 r523,544,523,554 r543,546,541,558 g519,550,513,557 g514,518,497,530 g496,511,494,511 r493,498,481,506
r500,527,500,535 r530,549,525,549 g520,548,517,556 r522,580,522,580 g549,579,542,579 r556,559,552,585 r557,568,544,575 r570,617,570,626 g617,619,605,655 g576,613,570,613
r572,582,558,595 r587,637,587,639 g575,636,572,656 r577,650,577,652 r655,691,634,691 r693,749,680,751 g743,746,705,755 r750,772,750,849 g771,784,747,824 g727,767,706,767
g695,729,693,736 g626,685,624,685 r626,652,611,652 g608,645,587,645 g583,607,581,617 r586,589,582,608 g545,583,545,583 r548,551,533,575 g527,555,518,565 g483,515,483,515
r483,485,472,493 r488,494,487,516 g473,481,473,491 g459,474,458,489 r457,459,453,471 g446,458,445,462 g443,446,440,453 g446,448,442,459 g444,446,431,462 g443,445,439,453
g440,446,437,454 g421,440,413,440 r422,427,420,443 g419,432,417,443 g399,410,385,413 g388,396,387,396 r387,393,379,398 g382,392,381,394 r378,392,377,397 r395,418,395,424
g394,417,390,417 g379,392,376,394 r380,384,374,402 g377,382,372,387 r378,405,377,417 g406,412,405,455 r408,468,408,473 g451,465,414,465 r461,513,457,513 r508,536,483,551
r542,567,485,567 g493,565,485,565 g403,482,403,482 g386,404,373,404 g371,389,371,389 g365,367,356,370 r364,366,355,366 g352,361,345,361 g349,355,344,359 r353,368,353,370
r365,408,358,411 r408,410,383,435 r416,479,416,486 r476,512,461,532 g469,507,462,507 g402,460,398,460 r399,434,398,447 r431,465,426,476 r458,474,411,503 r483,496,483,539
r491,530,477,534 g481,531,479,540 g475,478,463,510 g457,480,446,496 g400,453,397,469 r400,421,400,422 g411,424,410,442 r428,462,428,481 r457,513,438,515 g478,512,471,538
r481,526,474,530 g478,523,477,553 g424,475,424,475 r426,440,416,450 g401,436,399,436 r402,414,383,425 r418,430,413,440 g390,425,386,428 r390,392,381,410 g353,387,353,387
g337,352,337,357 g331,338,331,352 g332,334,331,347 r333,336,328,350 g313,336,313,360 r313,315,313,327 g303,315,298,322 r303,306,295,314 r306,312,306,326 r311,323,308,326
g299,322,299,324 r302,317,302,336 r317,334,317,356 g330,334,324,342 r330,385,330,393 g371,383,362,383 r376,435,376,435`.split(/\s+/);

document.getElementById('candles').innerHTML = candles.map((c, i) => {
  const up = c[0] === 'g';
  const [top, bottom, high, low] = c.slice(1).split(',').map(Number);
  const x = 5 + i * 10, left = Math.max(3, x - 4);
  return `<rect class="wick" x="${x}" y="${high}" width="1" height="${low - high}" fill="${up ? '#005000' : '#500000'}"/>` +
    `<rect x="${left}" y="${top}" width="${x + 5 - left}" height="${bottom - top}" fill="url(#${up ? 'gUp' : 'gDown'})"/>`;
}).join('');

// Time axis and month grid lines
const dates = { 55: 'Aug-2014', 115: 'Aug-10', 165: 'Aug-17', 265: 'Sep-2014', 325: 'Sep-10', 375: 'Sep-17', 475: 'Oct-2014', 535: 'Oct-09', 585: 'Oct-16',
  705: 'Nov-2014', 765: 'Nov-11', 815: 'Nov-18', 895: 'Dec-2014', 955: 'Dec-09', 1005: 'Dec-16', 1115: 'Jan-2015', 1175: 'Jan-10', 1225: 'Jan-17',
  1315: 'Feb-2015', 1375: 'Feb-10', 1425: 'Feb-18', 1505: 'Mar-2015', 1565: 'Mar-10', 1615: 'Mar-15', 1665: 'Mar-20', 1785: 'Apr-2015', 1845: '' };
let grid = '', axis = '';
for (const [x, label] of Object.entries(dates)) {
  if (label.length === 8) grid += `<path class="${label === 'Jan-2015' ? 'year' : ''}" d="M${x}.5 121V985"/>`;
  axis += `<path d="M${x}.5 985V990"/><text class="date" x="${x}" y="1003">${label}</text>`;
}

// Price axis
const yOf = price => Math.round(147.5 + (2200 - price) * 1.8506);
for (let p = 2210; p >= 1750; p -= 5) {
  const major = p % 25 === 0, y = yOf(p);
  axis += `<path d="M${major ? 1859 : 1862} ${y}.5H1865"/>`;
  if (major && p >= 1775 && p !== 2075 && p !== 2000) axis += `<text x="1868" y="${y + 4}">${p}.00</text>`;
}
document.getElementById('grid').innerHTML = grid;
document.getElementById('axis').innerHTML = axis;

document.getElementById('flags').innerHTML = [
  [376, '2076.14', '#f2ecc0', '#222'], [370, '2079.42', 'url(#gFlag)', '#111'], [391, '2068.37', '#228a88', '#fff'],
  [436, '2044.16', '#fff', '#111'], [516, '2000.52', '#f00000', '#fff']
].map(([y, text, fill, ink]) => `<path d="M1860.5 ${y}.5l6 -7h47q2 0 2 2v10q0 2 -2 2h-47z" fill="${fill}" stroke="#333"/><text x="1868" y="${y + 5}" fill="${ink}">${text}</text>`).join('');
```
